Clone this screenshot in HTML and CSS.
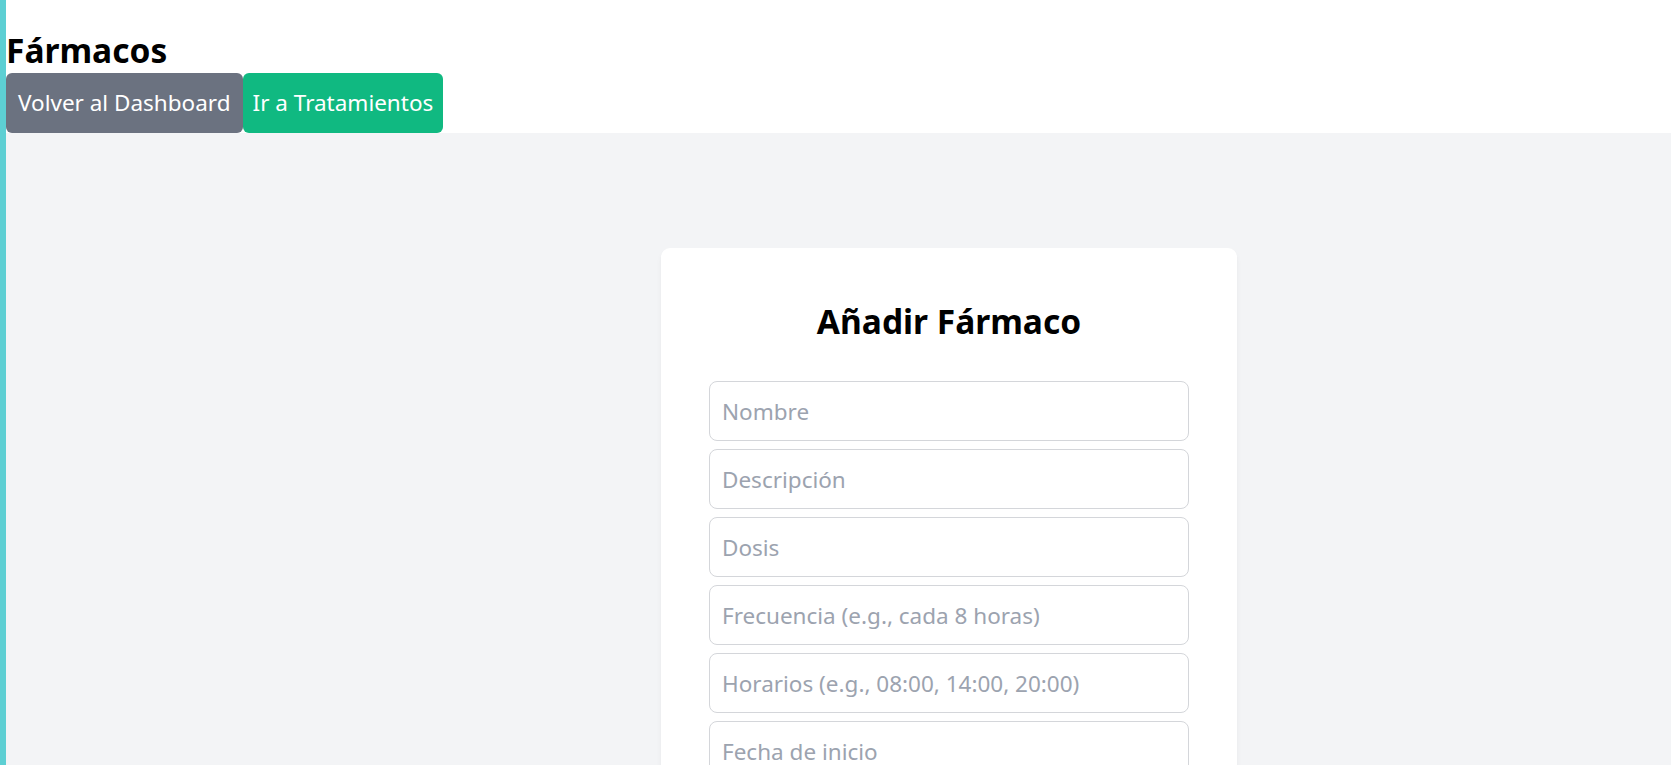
FILE: index.html
```html
<!DOCTYPE html>
<html lang="es">
<head>
<meta charset="utf-8">
<title>Fármacos</title>
<link rel="stylesheet" href="styles.css">
</head>
<body>
<header class="top">
  <h1 class="page-title">Fármacos</h1>
  <nav class="actions">
    <button class="btn btn-gray" type="button">Volver al Dashboard</button>
    <button class="btn btn-green" type="button">Ir a Tratamientos</button>
  </nav>
</header>
<main class="main">
  <section class="card">
    <h2 class="card-title">Añadir Fármaco</h2>
    <form class="form">
      <input class="field" type="text" placeholder="Nombre">
      <input class="field" type="text" placeholder="Descripción">
      <input class="field" type="text" placeholder="Dosis">
      <input class="field" type="text" placeholder="Frecuencia (e.g., cada 8 horas)">
      <input class="field" type="text" placeholder="Horarios (e.g., 08:00, 14:00, 20:00)">
      <input class="field" type="text" placeholder="Fecha de inicio">
      <input class="field" type="text" placeholder="Fecha de fin">
      <button class="btn btn-submit" type="button">Añadir</button>
    </form>
  </section>
</main>
</body>
</html>
```
FILE: styles.css
```css
* { box-sizing: border-box; }
html, body { margin: 0; padding: 0; }
body {
  font-family: "Noto Sans", "Open Sans", sans-serif;
  border-left: 6px solid #5dcfd3;
  background: #f3f4f6;
  min-height: 100vh;
  color: #000;
}
.top {
  background: #fff;
}
.page-title {
  margin: 0;
  padding-top: 28px;
  font-size: 33.5px;
  font-weight: 700;
  line-height: 45px;
}
.actions {
  display: flex;
}
.btn {
  font-family: inherit;
  font-size: 22.5px;
  line-height: 30px;
  height: 60px;
  padding: 0 12px;
  border: 0;
  border-radius: 6px;
  color: #fff;
  cursor: pointer;
}
.btn-gray { background: #6b7280; }
.btn-green { background: #10b981; padding: 0 10px; }
.main {
  display: flex;
  justify-content: center;
  padding: 115px 0 60px 221px;
}
.card {
  width: 576px;
  background: #fff;
  border-radius: 9px;
  padding: 50px 48px 48px;
  box-shadow: 0 4px 6px -1px rgba(0,0,0,0.06), 0 2px 4px -2px rgba(0,0,0,0.05);
}
.card-title {
  margin: 0 0 37px;
  text-align: center;
  font-size: 33.5px;
  font-weight: 700;
  line-height: 46px;
}
.form {
  display: flex;
  flex-direction: column;
  gap: 8px;
}
.field {
  height: 60px;
  width: 100%;
  padding: 0 12px;
  border: 1px solid #d4d6da;
  border-radius: 8px;
  font-family: inherit;
  font-size: 22.5px;
  color: #111827;
  background: #fff;
  outline: none;
}
.field::placeholder { color: #9ca3af; }
.btn-submit {
  background: #3b82f6;
  width: 100%;
}
```
